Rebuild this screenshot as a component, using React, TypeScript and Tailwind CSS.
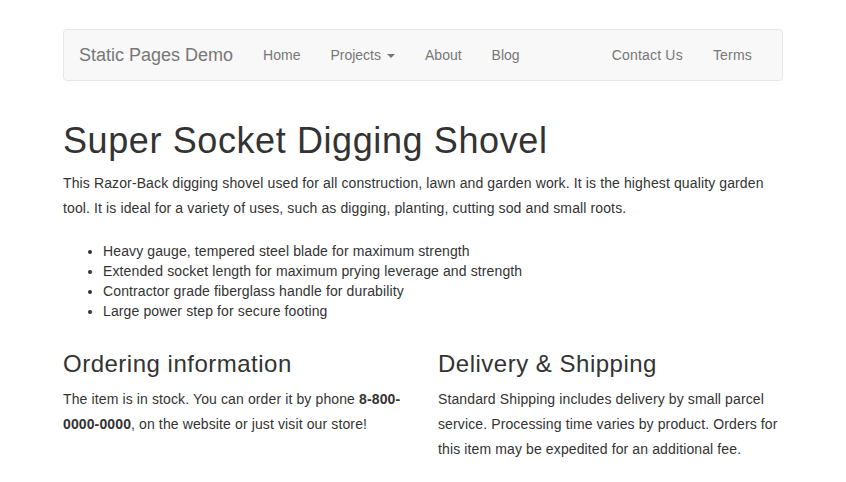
import React from "react"

const navLinks = ["Home", "Projects", "About", "Blog"]

const bullets = [
  "Heavy gauge, tempered steel blade for maximum strength",
  "Extended socket length for maximum prying leverage and strength",
  "Contractor grade fiberglass handle for durability",
  "Large power step for secure footing",
]

const App: React.FC = () => {
  return (
    <div
      className="min-h-screen bg-white pt-[29px] text-[14px] tracking-[0.12px] text-[#333]"
      style={{ fontFamily: '"Liberation Sans", Arial, sans-serif' }}
    >
      <div className="mx-auto w-[750px] px-[15px]">
        {/* Navbar */}
        <nav className="mb-10 flex h-[52px] items-stretch rounded border border-[#e7e7e7] bg-[#f8f8f8] px-[15px] tracking-normal">
          <a className="flex items-center py-[15px] pr-[15px] text-[18px] leading-5 text-[#777]">
            Static Pages Demo
          </a>
          <ul className="flex">
            {navLinks.map((link) => (
              <li key={link}>
                <a className="flex h-full items-center px-[15px] leading-5 text-[#777]">
                  {link}
                  {link === "Projects" && (
                    <span className="ml-[6px] mt-[2px] inline-block h-0 w-0 border-x-4 border-t-4 border-x-transparent border-t-[#777]" />
                  )}
                </a>
              </li>
            ))}
          </ul>
          <ul className="ml-auto flex">
            {["Contact Us", "Terms"].map((link) => (
              <li key={link}>
                <a className="flex h-full items-center px-[15px] leading-5 tracking-[0.2px] text-[#777]">
                  {link}
                </a>
              </li>
            ))}
          </ul>
        </nav>

        {/* Product */}
        <h1 className="mb-[10px] text-[36px] font-medium leading-[1.1] tracking-[0.6px] text-[#333]">
          Super Socket Digging Shovel
        </h1>
        <p className="mb-5 leading-[25px]">
          This Razor-Back digging shovel used for all construction, lawn and
          garden work. It is the highest quality garden tool. It is ideal for a
          variety of uses, such as digging, planting, cutting sod and small
          roots.
        </p>
        <ul className="mb-[10px] list-disc pl-10 leading-5">
          {bullets.map((b) => (
            <li key={b}>{b}</li>
          ))}
        </ul>

        <div className="-mx-[15px] flex">
          <div className="w-1/2 px-[15px]">
            <h3 className="mt-5 mb-[10px] text-[24px] font-medium leading-[1.1] tracking-[0.5px]">
              Ordering information
            </h3>
            <p className="leading-[25px]">
              The item is in stock. You can order it by phone{" "}
              <b>8-800-0000-0000</b>, on the website or just visit our store!
            </p>
          </div>
          <div className="w-1/2 px-[15px]">
            <h3 className="mt-5 mb-[10px] text-[24px] font-medium leading-[1.1] tracking-[0.5px]">
              Delivery &amp; Shipping
            </h3>
            <p className="leading-[25px]">
              Standard Shipping includes delivery by small parcel service.
              Processing time varies by product. Orders for this item may be
              expedited for an additional fee.
            </p>
          </div>
        </div>
      </div>
    </div>
  )
}

export default App
